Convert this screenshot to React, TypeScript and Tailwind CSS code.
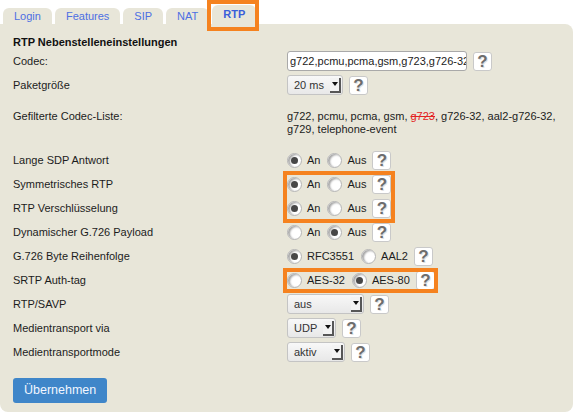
type RadioOpt = { label: string; checked?: boolean };

const tabs = ["Login", "Features", "SIP", "NAT", "RTP"];

function Help() {
  return (
    <span className="ml-[6px] inline-flex h-[19px] w-[19px] items-center justify-center rounded-[3px] border border-[#c9c9c9] bg-white text-[17px] font-bold leading-none text-[#6d6d6d] [text-shadow:1px_1px_0_#e2e2e2]">
      ?
    </span>
  );
}

function Radio({ checked }: { checked?: boolean }) {
  return (
    <span className="inline-flex h-[15px] w-[15px] shrink-0 items-center justify-center rounded-full border border-[#b4b4b4] bg-white shadow-[inset_2px_1px_2px_rgba(0,0,0,0.35)]">
      {checked && <span className="h-[7px] w-[7px] rounded-full bg-[#474747]" />}
    </span>
  );
}

function RadioGroup({ opts }: { opts: RadioOpt[] }) {
  return (
    <div className="flex items-center">
      {opts.map((o, i) => (
        <span key={o.label} className={`flex items-center ${i > 0 ? "ml-[7px]" : ""}`}>
          <Radio checked={o.checked} />
          <span className="ml-[5px]">{o.label}</span>
        </span>
      ))}
      <Help />
    </div>
  );
}

function Select({ value, width }: { value: string; width: string }) {
  return (
    <div className="flex items-center">
      <span
        className={`flex h-[20px] ${width} items-center justify-between rounded-[3px] border border-[#c4c4c4] bg-gradient-to-b from-[#f8f8f8] to-[#e8e8e8] pl-[6px] pr-[1px] text-[#333]`}
      >
        {value}
        <span className="flex h-[15px] w-[11px] items-center justify-center border-b-2 border-r-2 border-[#575757] bg-[#f3f3f3]">
          <svg width="6" height="4" viewBox="0 0 6 4">
            <path d="M0 0h6L3 4z" fill="#111" />
          </svg>
        </span>
      </span>
      <Help />
    </div>
  );
}

function Row({ label, children }: { label: string; children: React.ReactNode }) {
  return (
    <div className="grid h-[24px] grid-cols-[274px_1fr] items-center">
      <span>{label}</span>
      {children}
    </div>
  );
}

export default function App() {
  return (
    <div className="relative h-[418px] w-[587px] bg-white font-['Liberation_Sans',Arial,sans-serif] text-[11px] text-[#1c1c1c]">
      {/* tab strip */}
      <div className="flex h-[24px] items-end gap-[3px] pl-[3px]">
        {tabs.map((t) => (
          <span
            key={t}
            className={`flex items-center rounded-t-[6px] bg-[#e8e6d9] px-[11px] ${
              t === "RTP" ? "h-[19px] font-bold text-[#3a5fd9]" : "h-[16px] text-[#4d6fe3]"
            }`}
          >
            {t}
          </span>
        ))}
      </div>

      {/* settings panel */}
      <div className="w-[573px] rounded-b-[8px] rounded-tr-[8px] bg-[#e8e6d9] px-[13px] pb-[9px] pt-[12px]">
        <div className="font-bold leading-[13px] text-[#111]">RTP Nebenstelleneinstellungen</div>

        <Row label="Codec:">
          <div className="flex items-center">
            <input
              readOnly
              value="g722,pcmu,pcma,gsm,g723,g726-32"
              className="h-[20px] w-[180px] rounded-[3px] border border-[#a9a9a9] bg-white pl-[2px] text-[11px] text-[#222] outline-none"
            />
            <Help />
          </div>
        </Row>
        <Row label="Paketgröße">
          <Select value="20 ms" width="w-[56px]" />
        </Row>

        <div className="mt-[13px] grid grid-cols-[274px_1fr] leading-[13px]">
          <span>Gefilterte Codec-Liste:</span>
          <span>
            g722, pcmu, pcma, gsm, <span className="text-[#e32222] line-through">g723</span>, g726-32, aal2-g726-32,
            <br />
            g729, telephone-event
          </span>
        </div>

        <div className="mt-[12px]">
          <Row label="Lange SDP Antwort">
            <RadioGroup opts={[{ label: "An", checked: true }, { label: "Aus" }]} />
          </Row>
          <Row label="Symmetrisches RTP">
            <RadioGroup opts={[{ label: "An", checked: true }, { label: "Aus" }]} />
          </Row>
          <Row label="RTP Verschlüsselung">
            <RadioGroup opts={[{ label: "An", checked: true }, { label: "Aus" }]} />
          </Row>
          <Row label="Dynamischer G.726 Payload">
            <RadioGroup opts={[{ label: "An" }, { label: "Aus", checked: true }]} />
          </Row>
          <Row label="G.726 Byte Reihenfolge">
            <RadioGroup opts={[{ label: "RFC3551", checked: true }, { label: "AAL2" }]} />
          </Row>
          <Row label="SRTP Auth-tag">
            <RadioGroup opts={[{ label: "AES-32" }, { label: "AES-80", checked: true }]} />
          </Row>
          <Row label="RTP/SAVP">
            <Select value="aus" width="w-[77px]" />
          </Row>
          <Row label="Medientransport via">
            <Select value="UDP" width="w-[49px]" />
          </Row>
          <Row label="Medientransportmode">
            <Select value="aktiv" width="w-[58px]" />
          </Row>
        </div>

        <button className="mt-[14px] flex h-[25px] items-center rounded-[3px] bg-[#3f86c9] px-[11px] text-[12.5px] text-[#f2f6ff]">
          Übernehmen
        </button>
      </div>

      {/* highlight frames */}
      <div className="pointer-events-none absolute left-[207px] top-0 h-[31px] w-[52px] border-4 border-[#f5821f]" />
      <div className="pointer-events-none absolute left-[283px] top-[171px] h-[52px] w-[112px] border-4 border-[#f5821f]" />
      <div className="pointer-events-none absolute left-[283px] top-[268px] h-[25px] w-[155px] border-4 border-[#f5821f]" />
    </div>
  );
}
